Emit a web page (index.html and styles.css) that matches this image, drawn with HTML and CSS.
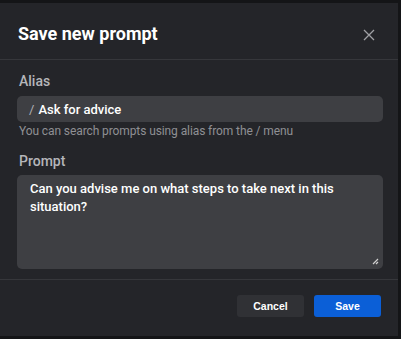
FILE: index.html
```html
<!DOCTYPE html>
<html>
<head>
<meta charset="utf-8">
<link rel="stylesheet" href="styles.css">
</head>
<body>
<div class="dialog">
  <div class="header">
    <h1 class="title">Save new prompt</h1>
    <button class="close" aria-label="Close">
      <svg width="12" height="12" viewBox="0 0 12 12"><path d="M1 1L11 11M11 1L1 11" stroke="#a0a1a5" stroke-width="1.3" fill="none"/></svg>
    </button>
  </div>
  <div class="body">
    <div class="label">Alias</div>
    <div class="input"><span class="slash">/</span><span class="value">Ask for advice</span></div>
    <div class="help">You can search prompts using alias from the / menu</div>
    <div class="label label-prompt">Prompt</div>
    <div class="textarea">Can you advise me on what steps to take next in this situation?
      <svg class="grip" width="7" height="7" viewBox="0 0 7 7"><path d="M6 1L1 6M6 4L4 6" stroke="#d0d0d0" stroke-width="1.2" fill="none"/></svg>
    </div>
  </div>
  <div class="footer">
    <button class="btn btn-cancel">Cancel</button>
    <button class="btn btn-save">Save</button>
  </div>
</div>
</body>
</html>
```
FILE: styles.css
```css
html, body { margin: 0; padding: 0; }
body {
  background: #141517;
  width: 401px;
  height: 339px;
  overflow: hidden;
  font-family: Roboto, "Noto Sans", sans-serif;
  padding-top: 3px;
  box-sizing: border-box;
}
.dialog {
  width: 398px;
  height: 333px;
  background: #242529;
  display: flex;
  flex-direction: column;
}
.header {
  height: 57px;
  border-bottom: 1px solid #36373b;
  display: flex;
  align-items: center;
  justify-content: space-between;
  padding: 5px 23px 0 18px;
  box-sizing: border-box;
  flex: none;
}
.title {
  margin: 0;
  font-size: 18px;
  font-weight: 700;
  color: #fff;
}
.close {
  background: none;
  border: 0;
  padding: 0;
  width: 12px;
  height: 12px;
  display: flex;
  margin-top: 3px;
}
.body {
  padding: 11px 15px 0 17px;
  height: 220px;
  box-sizing: border-box;
  border-bottom: 1px solid #36373b;
  flex: none;
}
.label {
  font-size: 14px;
  font-weight: 500;
  color: #b5b6ba;
  line-height: 20px;
  padding-left: 2px;
}
.label-prompt { margin-top: 12px; }
.input {
  margin-top: 5px;
  height: 26px;
  background: #3e3f43;
  border-radius: 5px;
  display: flex;
  align-items: center;
  padding-left: 12px;
  font-size: 13px;
  font-weight: 500;
  color: #fff;
}
.slash { color: #b0b1b5; margin-right: 4px; font-weight: 400; }
.help {
  font-size: 12px;
  letter-spacing: -0.1px;
  color: #8f9094;
  line-height: 16px;
  margin-top: 1px;
  padding-left: 2px;
}
.textarea {
  position: relative;
  margin-top: 4px;
  height: 94px;
  box-sizing: border-box;
  background: #3e3f43;
  border-radius: 5px;
  padding: 5px 12px 0 13px;
  font-size: 13px;
  font-weight: 500;
  line-height: 18px;
  color: #fff;
}
.grip { position: absolute; right: 4px; bottom: 4px; }
.footer {
  flex: 1;
  display: flex;
  justify-content: flex-end;
  align-items: flex-start;
  padding: 15px 17px 0 0;
  gap: 10px;
}
.btn {
  height: 22px;
  width: 67px;
  border: 0;
  border-radius: 3px;
  font-family: "Liberation Sans", Arial, sans-serif;
  font-size: 10.5px;
  font-weight: 700;
  color: #fff;
  padding: 0;
}
.btn-cancel { background: #303135; }
.btn-save { background: #0b5fd7; }
```
